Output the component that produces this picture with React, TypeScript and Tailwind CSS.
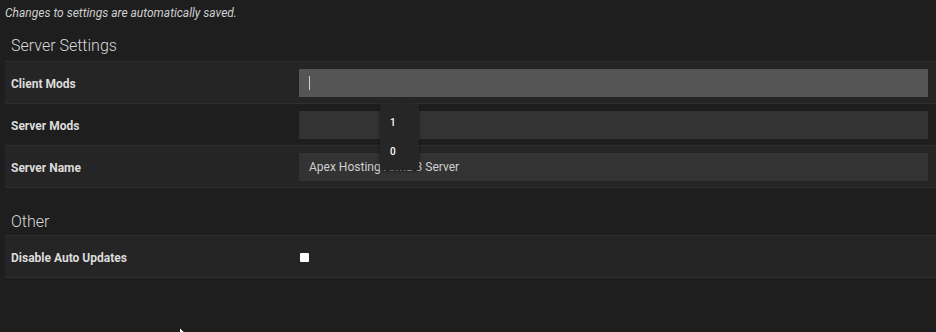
import React from "react";

function Row({
  label,
  striped,
  last,
  children,
}: {
  label: string;
  striped?: boolean;
  last?: boolean;
  children: React.ReactNode;
}) {
  return (
    <div
      className={`flex items-center h-[42px] border-t border-[#2e2e2e] ${
        last ? "border-b border-b-[#2e2e2e] h-[43px]" : ""
      } ${striped ? "bg-[#252525]" : "bg-[#1e1e1e]"}`}
    >
      <div className="w-[294px] shrink-0 pl-[6px] pt-[2px] text-[12px] font-bold text-[#dcdcdc]">
        {label}
      </div>
      <div className="flex-1 pr-[8px] flex items-center">{children}</div>
    </div>
  );
}

export default function App() {
  return (
    <div
      className="relative h-[332px] w-full overflow-hidden bg-[#1e1e1e] pl-[5px]"
      style={{ fontFamily: "Roboto, 'Liberation Sans', sans-serif" }}
    >
      <p className="pt-[5px] text-[12px] leading-[16px] italic text-[#cfcfcf]">
        Changes to settings are automatically saved.
      </p>
      <h2 className="pl-[6px] pt-[14px] pb-[4px] text-[16px] leading-[22px] font-light text-[#d8d8d8]">
        Server Settings
      </h2>
      <div>
        <Row label="Client Mods" striped>
          <div className="h-[28px] w-full bg-[#555555] flex items-center pl-[10px]">
            <div className="w-[1px] h-[14px] bg-[#cfcfcf]" />
          </div>
        </Row>
        <Row label="Server Mods">
          <div className="h-[28px] w-full bg-[#333333]" />
        </Row>
        <Row label="Server Name" striped last>
          <div className="h-[28px] w-full bg-[#333333] flex items-center pl-[10px] pt-[1px] text-[12px] text-[#cfcfcf]">
            Apex Hosting Arma 3 Server
          </div>
        </Row>
      </div>
      <h2 className="pl-[6px] pt-[23px] pb-[2px] text-[16px] leading-[22px] font-light text-[#d8d8d8]">
        Other
      </h2>
      <Row label="Disable Auto Updates" striped last>
        <div className="ml-[1px] mt-[2px] w-[9px] h-[9px] bg-white rounded-[1px]" />
      </Row>

      {/* datalist popup */}
      <div className="absolute left-[380px] top-[104px] w-[39px] h-[66px] bg-[#262626] shadow-[0_1px_3px_rgba(0,0,0,0.5)]">
        <div className="absolute left-[14px] -top-[4px] w-0 h-0 border-l-[4px] border-r-[4px] border-b-[4px] border-l-transparent border-r-transparent border-b-[#262626]" />
        <div className="absolute left-[10px] top-[12px] text-[10px] leading-[14px] font-medium text-white">1</div>
        <div className="absolute left-[10px] top-[41px] text-[10px] leading-[14px] font-medium text-white">0</div>
      </div>

      {/* mouse pointer */}
      <svg
        className="absolute left-[179px] top-[327px]"
        width="8"
        height="12"
        viewBox="0 0 8 12"
      >
        <path d="M0.5 0.5 L0.5 10 L3 7.5 L4.8 11.5 L6.2 10.9 L4.5 7 L7.5 7 Z" fill="#fff" stroke="#000" strokeWidth="0.8" />
      </svg>
    </div>
  );
}
